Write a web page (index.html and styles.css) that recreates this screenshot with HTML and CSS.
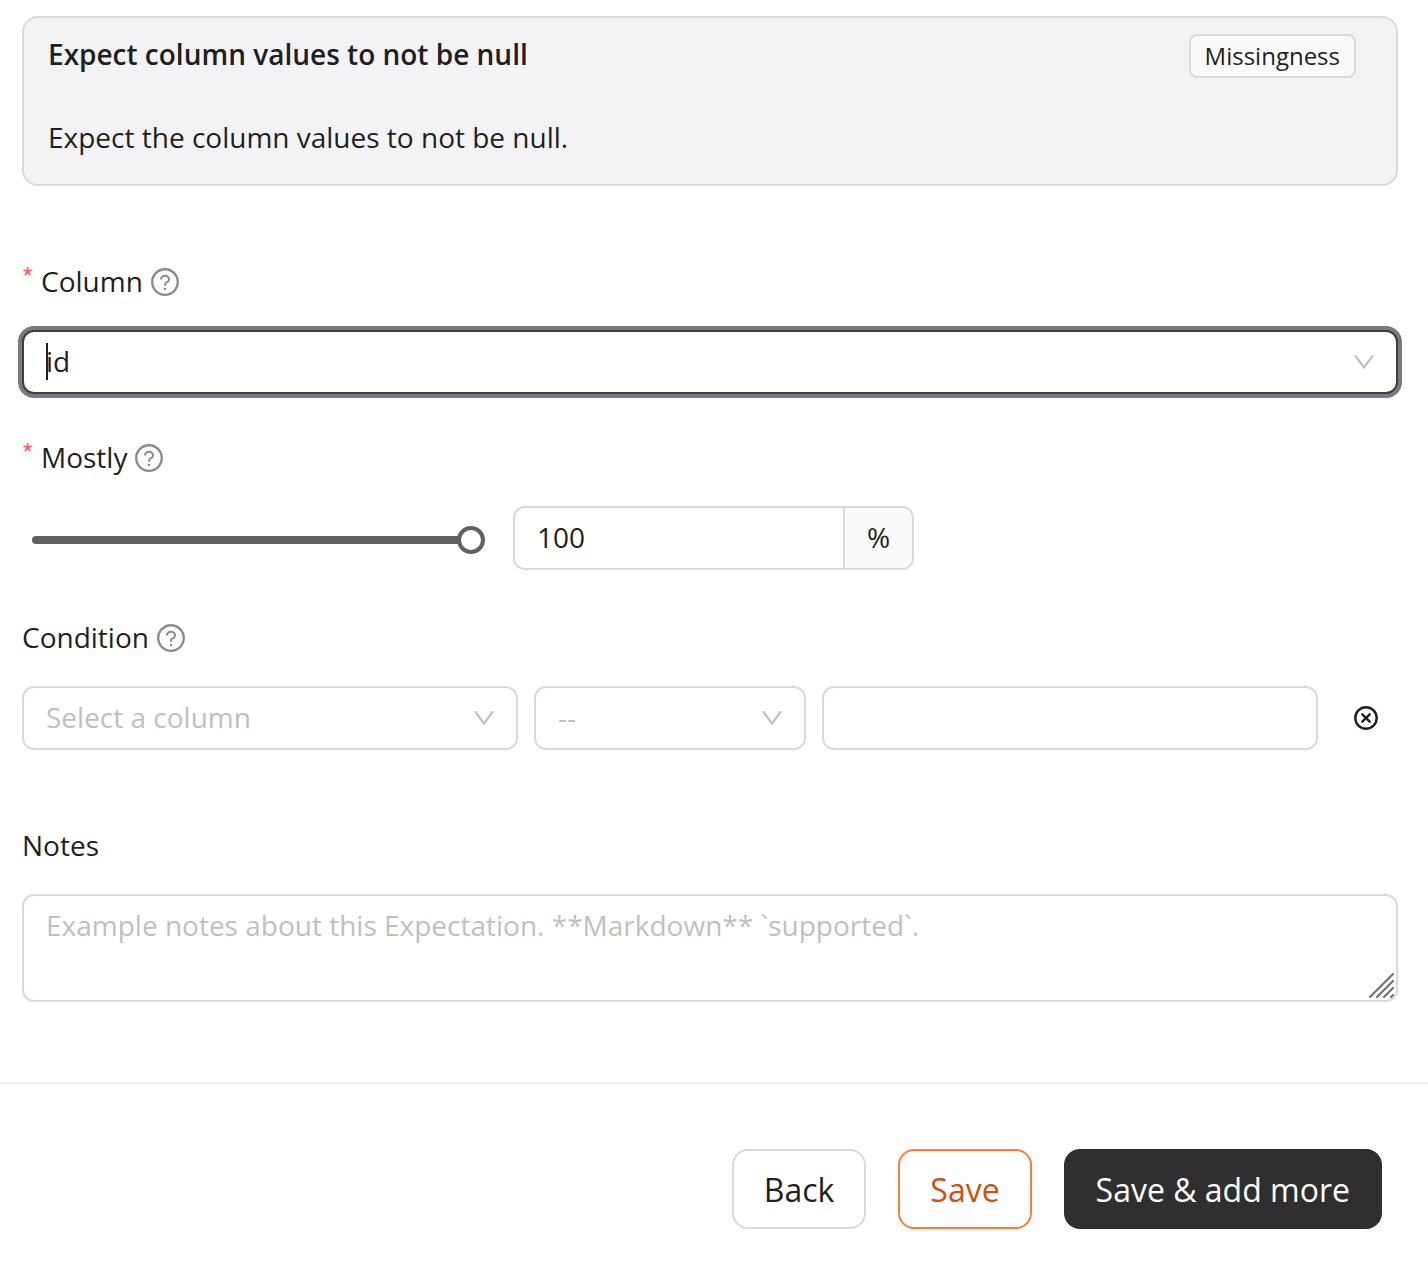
FILE: index.html
```html
<!DOCTYPE html>
<html lang="en">
<head>
<meta charset="utf-8">
<title>Expectation</title>
<link rel="stylesheet" href="styles.css">
</head>
<body>
<svg class="defs" aria-hidden="true">
  <symbol id="question" viewBox="64 64 896 896"><path d="M512 64C264.600 64 64 264.600 64 512s200.600 448 448 448 448-200.600 448-448S759.400 64 512 64zm0 820c-205.400 0-372-166.600-372-372s166.600-372 372-372 372 166.600 372 372-166.600 372-372 372z"/><path d="M623.600 316.700C593.600 290.400 554 276 512 276s-81.600 14.500-111.600 40.700C369.200 344 352 380.700 352 420v7.600c0 4.400 3.600 8 8 8h48c4.400 0 8-3.600 8-8V420c0-44.100 43.100-80 96-80s96 35.900 96 80c0 31.100-22 59.600-56.100 72.700-21.200 8.100-39.200 22.300-52.100 40.900-13.100 19-19.900 41.800-19.900 64.900V620c0 4.400 3.600 8 8 8h48c4.400 0 8-3.600 8-8v-22.700a48.300 48.300 0 0 1 30.900-44.800c59-22.700 97.100-74.700 97.100-132.500.1-39.300-17.100-76-48.300-103.300zM472 732a40 40 0 1 0 80 0 40 40 0 1 0-80 0z"/></symbol>
  <symbol id="down" viewBox="64 64 896 896"><path d="M884 256h-75c-5.100 0-9.900 2.500-12.900 6.600L512 654.200 227.900 262.600c-3-4.100-7.800-6.600-12.900-6.600h-75c-6.500 0-10.300 7.400-6.500 12.700l352.600 486.100c12.800 17.600 39 17.600 51.700 0l352.600-486.100c3.900-5.300.1-12.700-6.400-12.700z"/></symbol>
</svg>
<main class="form">
  <section class="card">
    <header class="card-head">
      <h1 class="card-title">Expect column values to not be null</h1>
      <span class="tag">Missingness</span>
    </header>
    <p class="card-body">Expect the column values to not be null.</p>
  </section>

  <div class="field field-column">
    <div class="label"><span class="required">*</span><span class="label-text">Column</span><svg class="help"><use href="#question"/></svg></div>
    <div class="control select focused">
      <span class="value"><span class="caret"></span>id</span>
      <svg class="arrow"><use href="#down"/></svg>
    </div>
  </div>

  <div class="field field-mostly">
    <div class="label"><span class="required">*</span><span class="label-text">Mostly</span><svg class="help"><use href="#question"/></svg></div>
    <div class="mostly">
      <div class="slider"><div class="track"></div><div class="handle"></div></div>
      <div class="control number"><span class="amount">100</span><span class="addon">%</span></div>
    </div>
  </div>

  <div class="field field-condition">
    <div class="label"><span class="label-text">Condition</span><svg class="help"><use href="#question"/></svg></div>
    <div class="condition">
      <div class="control select"><span class="placeholder">Select a column</span><svg class="arrow"><use href="#down"/></svg></div>
      <div class="control select"><span class="placeholder">--</span><svg class="arrow"><use href="#down"/></svg></div>
      <div class="control"></div>
      <svg class="clear" viewBox="0 0 24 24"><circle cx="12" cy="12" r="10.700"/><path d="M8.300 8.300l7.400 7.400M15.700 8.300l-7.400 7.400"/></svg>
    </div>
  </div>

  <div class="field field-notes">
    <div class="label"><span class="label-text">Notes</span></div>
    <div class="control notes">
      <span class="placeholder">Example notes about this Expectation. **Markdown** `supported`.</span>
      <svg class="grip" viewBox="0 0 25 25"><path d="M1 24L24 1M8 24L24 8M15 24L24 15M22 24L24 22"/></svg>
    </div>
  </div>
</main>
<footer class="footer">
  <button class="btn">Back</button>
  <button class="btn btn-outline">Save</button>
  <button class="btn btn-primary">Save &amp; add more</button>
</footer>
</body>
</html>
```
FILE: styles.css
```css
* { box-sizing: border-box; }
body {
  margin: 0;
  background: #fff;
  color: #1f1f1f;
  font: 28px/44px "Open Sans", sans-serif;
}
.defs { position: absolute; width: 0; height: 0; }
.form {
  height: 1082px;
  padding: 16px 30px 0 22px;
}
.card {
  height: 170px;
  border: 2px solid #d9d9d9;
  border-radius: 16px;
  background: #f3f3f5;
}
.card-head {
  display: flex;
  align-items: center;
  justify-content: space-between;
  height: 76px;
  padding: 0 40px 0 24px;
  border-bottom: 2px solid #f0f0f0;
}
.card-title { margin: 0; padding-bottom: 2px; font-size: 28px; font-weight: 600; }
.tag {
  height: 44px;
  margin-top: 2px;
  padding: 0 14px;
  border: 2px solid #d9d9d9;
  border-radius: 8px;
  background: #fafafa;
  font-size: 24px;
  line-height: 40px;
}
.card-body { margin: 0; padding: 21px 24px; }
.label { display: flex; align-items: center; height: 44px; }
.label-text, .select .placeholder, .value { padding-bottom: 2px; }
.required {
  width: 19px;
  padding: 0 0 12px 1px;
  color: #ff4d4f;
  font: 24px/28px "Liberation Sans", sans-serif;
}
.help { width: 28px; height: 28px; margin-left: 8px; fill: #8c8c8c; }
.field-column { margin-top: 74px; }
.field-mostly { margin-top: 42px; }
.field-condition { margin-top: 46px; }
.field-notes { margin-top: 74px; }
.control {
  height: 64px;
  border: 2px solid #d9d9d9;
  border-radius: 12px;
  background: #fff;
}
.select {
  display: flex;
  align-items: center;
  justify-content: space-between;
  padding: 0 20px 0 22px;
}
.field-column .control { margin-top: 26px; }
.focused { border-color: #3f3f40; box-shadow: 0 0 0 4px #787981; }
.value { position: relative; }
.caret {
  position: absolute;
  left: 0;
  top: 4px;
  width: 2px;
  height: 37px;
  background: #1f1f1f;
}
.placeholder { color: #bfbfbf; }
.arrow { width: 24px; height: 24px; fill: #bfbfbf; }
.mostly {
  display: flex;
  align-items: center;
  gap: 28px;
  margin-top: 26px;
  padding-left: 10px;
}
.slider { display: flex; align-items: center; width: 453px; padding-top: 4px; }
.track { flex: 1; height: 8px; border-radius: 4px 0 0 4px; background: #616066; }
.handle { width: 28px; height: 28px; margin-left: -1px; border: 4px solid #616066; border-radius: 50%; background: #fff; }
.number { display: flex; width: 401px; overflow: hidden; line-height: 58px; }
.amount { flex: 1; padding-left: 22px; }
.addon { width: 69px; border-left: 2px solid #d9d9d9; background: #fafafa; text-align: center; }
.condition {
  display: grid;
  grid-template-columns: 496px 272px 496px 24px;
  column-gap: 16px;
  align-items: center;
  margin-top: 26px;
}
.clear { width: 24px; height: 24px; margin-left: 20px; fill: none; stroke: #1f1f1f; stroke-width: 2.4; stroke-linecap: round; }
.notes {
  position: relative;
  height: 108px;
  margin-top: 26px;
  padding: 7px 22px;
}
.grip {
  position: absolute;
  right: 2px;
  bottom: 2px;
  width: 25px;
  height: 25px;
  fill: none;
  stroke: #6f6f6f;
  stroke-width: 2;
  stroke-linecap: round;
}
.footer {
  display: flex;
  justify-content: flex-end;
  gap: 32px;
  height: 192px;
  padding: 65px 46px 0 0;
  border-top: 2px solid #f0f0f0;
}
.btn {
  height: 80px;
  padding: 2px 30px 0;
  border: 2px solid #d9d9d9;
  border-radius: 16px;
  background: #fff;
  color: #1f1f1f;
  font: 32px/48px "Open Sans", sans-serif;
}
.btn-outline { border-color: #ff7b38; color: #d2500f; }
.btn-primary { border-color: #2f2f2f; background: #2f2f2f; color: #fff; }
```
